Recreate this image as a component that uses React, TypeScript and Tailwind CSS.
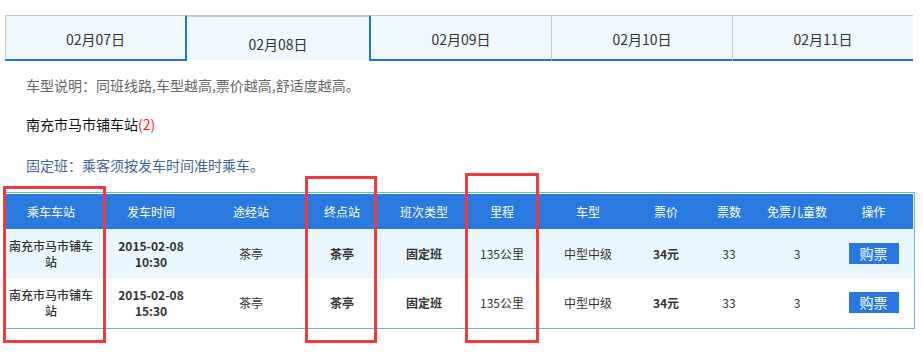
import React from "react";

const font = { fontFamily: '"Noto Sans CJK SC", "Noto Sans", sans-serif' };

const tabs = ["02月07日", "02月08日", "02月09日", "02月10日", "02月11日"];

const headers = ["乘车车站", "发车时间", "途经站", "终点站", "班次类型", "里程", "车型", "票价", "票数", "免票儿童数", "操作"];

const rows = [
  { time: "10:30", bg: "bg-[#eaf6fe]" },
  { time: "15:30", bg: "bg-white" },
];

const cols = "grid grid-cols-[92px_108px_92px_90px_74px_82px_90px_66px_60px_76px_77px]";

function Tab({ label, index }: { label: string; index: number }) {
  if (index === 1) {
    return (
      <div className="w-[182px] h-[45px] bg-[#eef8fe] border-t-2 border-[#c8c8c8] flex justify-center pt-[17px] text-[14px] leading-[20px] text-[#333]">
        {label}
      </div>
    );
  }
  const side =
    index === 0
      ? "w-[182px] border-l border-l-[#c8c8c8] border-r-2 border-r-[#1f74e0]"
      : index === 2
      ? "w-[182px] border-l-2 border-l-[#1f74e0]"
      : index === 3
      ? "w-[181px] border-l border-l-[#c8c8c8]"
      : "w-[181px] border-l border-l-[#c8c8c8]";
  return (
    <div
      className={`${side} h-[46px] bg-[#eef8fe] border-t border-t-[#c8c8c8] border-b-2 border-b-[#1f74e0] flex items-center justify-center pt-[2px] text-[14px] leading-[20px] text-[#333]`}
    >
      {label}
    </div>
  );
}

export default function App() {
  return (
    <div className="relative w-[923px] h-[356px] bg-white overflow-hidden" style={font}>
      <div className="pt-[15px] pl-[5px]">
        <div className="flex items-start">
          {tabs.map((t, i) => (
            <Tab key={t} label={t} index={i} />
          ))}
        </div>

        <div className="pl-[21px] text-[14px] leading-[20px]">
          <p className="mt-[14px] text-[#666]">车型说明：同班线路,车型越高,票价越高,舒适度越高。</p>
          <p className="mt-[19px] text-[#111]">
            南充市马市铺车站<span className="text-[#ff1a1a]">(2)</span>
          </p>
          <p className="mt-[21px] text-[#3d6699]">固定班：乘客须按发车时间准时乘车。</p>
        </div>

        <div className="mt-[17px] w-[910px] border-t border-r border-b border-[#66b6ee] pt-[1px] pr-[1px] pb-[1px]">
          <div className={`${cols} h-[35px] bg-[#2a79df] text-white text-[12px]`}>
            {headers.map((h) => (
              <div key={h} className="flex items-center justify-center">
                {h}
              </div>
            ))}
          </div>
          {rows.map((r) => (
            <div key={r.time} className={`${cols} h-[49px] ${r.bg} text-[#333] text-[12px] leading-[16px]`}>
              <div className="flex items-center justify-center text-center px-[3px] font-medium">南充市马市铺车站</div>
              <div className="flex flex-col items-center justify-center font-bold">
                <span>2015-02-08</span>
                <span>{r.time}</span>
              </div>
              <div className="flex items-center justify-center">茶亭</div>
              <div className="flex items-center justify-center font-bold">茶亭</div>
              <div className="flex items-center justify-center font-bold">固定班</div>
              <div className="flex items-center justify-center">135公里</div>
              <div className="flex items-center justify-center">中型中级</div>
              <div className="flex items-center justify-center font-bold">34元</div>
              <div className="flex items-center justify-center">33</div>
              <div className="flex items-center justify-center">3</div>
              <div className="flex items-center justify-center">
                <button className="w-[50px] h-[21px] bg-[#2878e0] text-white text-[14px] leading-[21px]">购票</button>
              </div>
            </div>
          ))}
        </div>
      </div>

      {/* highlight frames */}
      <div className="absolute left-[3px] top-[186px] w-[103px] h-[157px] border-[3px] border-[#f23a3a]" />
      <div className="absolute left-[305px] top-[176px] w-[72px] h-[167px] border-[3px] border-[#f23a3a]" />
      <div className="absolute left-[465px] top-[173px] w-[74px] h-[170px] border-[3px] border-[#f23a3a]" />
    </div>
  );
}
